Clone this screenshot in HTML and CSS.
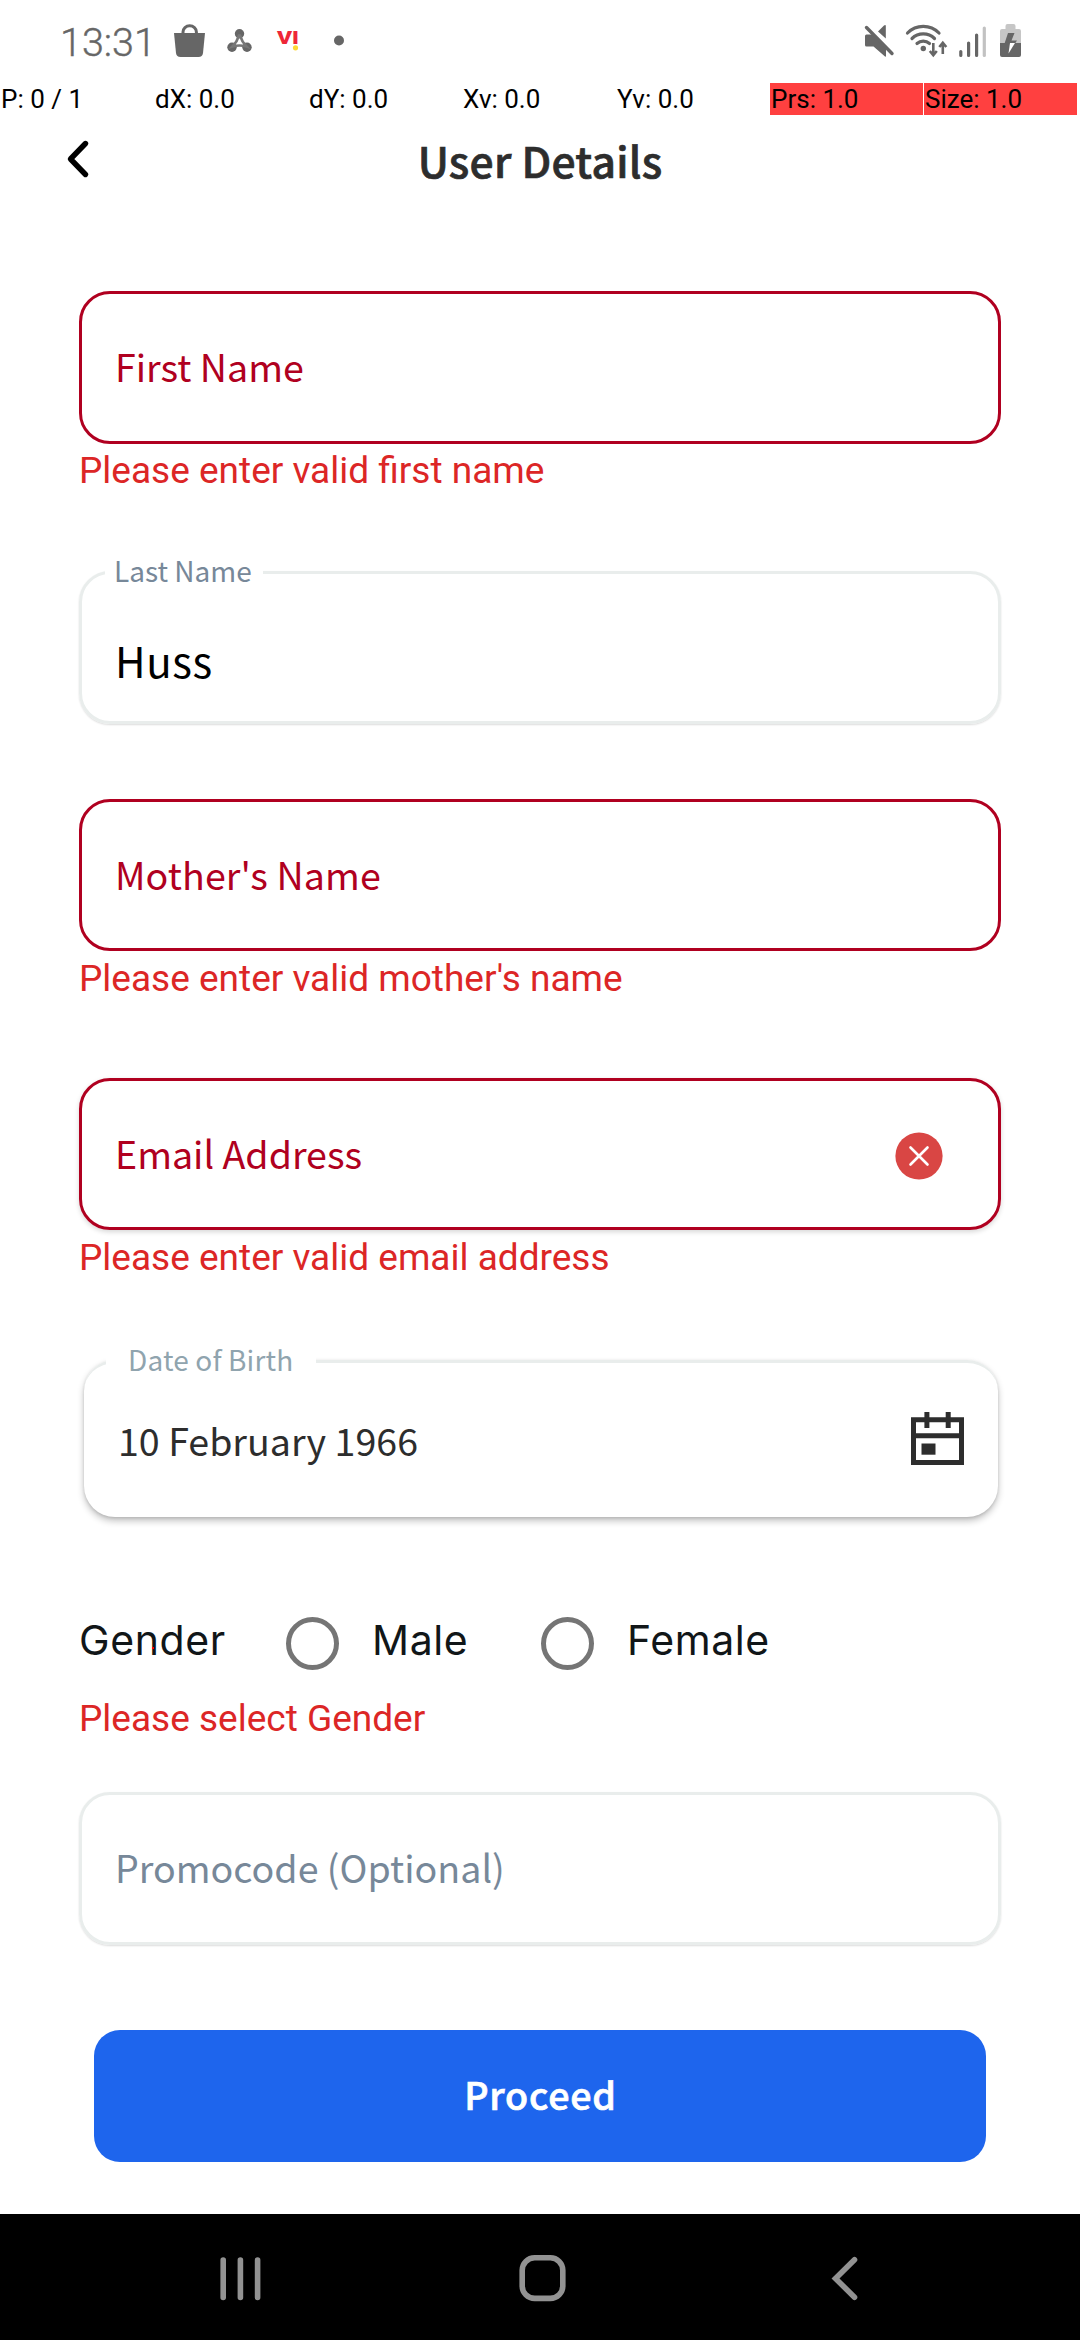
FILE: index.html
```html
<!DOCTYPE html>
<html lang="en">
<head>
<meta charset="utf-8">
<title>User Details</title>
<link rel="stylesheet" href="styles.css">
</head>
<body>
<div class="screen">
  <header class="status">
    <span class="clock">13:31</span>
    <svg class="status-left" width="180" height="40" viewBox="170 20 180 40">
      <g fill="#666">
        <path d="M174 33h31l-2 20q-.5 4-4.500 4h-18q-4 0-4.500-4z"/>
        <path d="M183 34v-2a6.700 6.200 0 0 1 13.400 0v2" fill="none" stroke="#666" stroke-width="3"/>
        <circle cx="239.500" cy="33.800" r="4.700"/><circle cx="232" cy="47.300" r="4.700"/><circle cx="247" cy="47.300" r="4.700"/>
        <path d="M239 35.500Q237 42 232.500 46.500Q239.500 44.500 246.500 46.500Q242 42 240 35.500z" fill="none" stroke="#777" stroke-width="2.600"/>
        <circle cx="339" cy="40.500" r="5"/>
      </g>
      <text class="carrier" x="277" y="44" textLength="22" lengthAdjust="spacingAndGlyphs">VI</text>
      <circle cx="295.500" cy="47.800" r="2.600" fill="#fdd835"/>
    </svg>
    <svg class="status-right" width="170" height="40" viewBox="860 20 170 40">
      <g fill="#666">
        <path d="M865 36q0-1.500 1.500-1.500h6L886 48.500V56q0 1-1 .5L873.500 46.500h-7q-1.500 0-1.500-1.500z"/>
        <path d="M878 31.500l6-6q1.800-1 1.800.5V38.500z"/>
        <path d="M866.500 27.500l25.500 26" stroke="#666" stroke-width="3.400" stroke-linecap="round"/>
      </g>
      <g fill="none" stroke="#666" stroke-width="3.200" stroke-linecap="round">
        <path d="M907.500 33a22 22 0 0 1 31.500 0M912 38.500a16 16 0 0 1 22.500 0M917 43.500a9.500 9.500 0 0 1 12.500 0"/>
      </g>
      <circle cx="923.300" cy="48.500" r="2.700" fill="#666"/>
      <path d="M933.300 43v12M929.800 51l3.500 4.200 3.500-4.200M942.800 54V43M939.300 47l3.500-4.200 3.500 4.200" fill="none" stroke="#666" stroke-width="2.600"/>
      <g stroke="#666" stroke-width="3.200" stroke-linecap="round">
        <path d="M960.800 51.500v4M968.600 43v12.500M976.600 35v20.500"/><path stroke="#c2c2c2" d="M984.300 28v27.500"/>
      </g>
      <path fill="#c6c6c6" d="M1005.500 29v-3q0-2 2-2h6q2 0 2 2v3h3.500q2 0 2 2v12h-21V31q0-2 2-2z"/>
      <path fill="#666" d="M1000 43h21v12q0 2-2 2h-17q-2 0-2-2z"/>
      <path fill="#666" d="M1008 33h6.500l-3 7.500h5.500l-2 3h-10.500z"/>
      <path fill="#fff" d="M1010 43h5l-6.500 10.500z"/>
    </svg>
  </header>

  <div class="pointer-bar">
    <span>P: 0 / 1</span><span>dX: 0.0</span><span>dY: 0.0</span><span>Xv: 0.0</span><span>Yv: 0.0</span><span class="hot">Prs: 1.0</span><span class="hot">Size: 1.0</span>
  </div>

  <nav class="app-bar">
    <svg class="back" width="30" height="44" viewBox="0 0 30 44"><path d="M21.500 6.500L6.500 22l15 15.500" fill="none" stroke="#000" stroke-width="5.400" stroke-linecap="round" stroke-linejoin="round"/></svg>
    <h1>User Details</h1>
  </nav>

  <main class="form">
    <div class="field invalid"><span class="hint">First Name</span></div>
    <p class="error">Please enter valid first name</p>

    <div class="field last"><span class="label">Last Name</span><span class="value">Huss</span></div>

    <div class="field invalid mother"><span class="hint">Mother's Name</span></div>
    <p class="error">Please enter valid mother's name</p>

    <div class="field invalid email">
      <span class="hint">Email Address</span>
      <svg class="clear" width="48" height="48" viewBox="0 0 48 48"><circle cx="24" cy="24" r="23.600" fill="#d94644"/><path d="M15.500 15.500l17 17M32.500 15.500l-17 17" stroke="#fff" stroke-width="2.600" stroke-linecap="round"/></svg>
    </div>
    <p class="error">Please enter valid email address</p>

    <div class="date">
      <span class="label">Date of Birth</span>
      <span class="hint">10 February 1966</span>
      <svg class="calendar" width="53" height="53" viewBox="0 0 53 53"><g fill="none" stroke="#2d2d2d" stroke-width="5"><path d="M2.500 7.700h48v42.800h-48zM2.500 23.700h48M15.900 0v16M37.200 0v16"/></g><path fill="#2d2d2d" d="M10.500 31.500H24.500V42.700H10.500z"/></svg>
    </div>

    <div class="gender">
      <span class="gender-title">Gender</span>
      <i class="radio"></i><span class="male">Male</span>
      <i class="radio"></i><span class="female">Female</span>
      <b class="pointer"></b>
    </div>
    <p class="error gender-error">Please select Gender</p>

    <div class="field promo"><span class="hint">Promocode (Optional)</span></div>
    <button class="proceed" type="button">Proceed</button>
  </main>

  <footer class="system-nav">
    <svg width="1080" height="126" viewBox="0 2214 1080 126" fill="none" stroke="#929292" stroke-width="5.600" stroke-linecap="round" stroke-linejoin="round">
      <path d="M223.200 2260v37.500M240.400 2260v37.500M257.600 2260v37.500"/>
      <rect x="522.200" y="2257.800" width="40.600" height="40.600" rx="12.500"/>
      <path stroke-linejoin="miter" d="M854.500 2259.800L835.500 2278.500l19 18.700"/>
    </svg>
  </footer>
</div>
</body>
</html>
```
FILE: styles.css
```css
* { box-sizing: border-box; }

body {
  margin: 0;
  background: #fff;
  font-family: Roboto, sans-serif;
}

.screen {
  width: 1080px;
  height: 2340px;
  display: flex;
  flex-direction: column;
  overflow: hidden;
}

.status {
  height: 83px;
  padding: 20px 50px 0 60px;
  display: flex;
  align-items: flex-start;
}

.clock {
  width: 110px;
  font-size: 39.5px;
  line-height: 45px;
  font-weight: 300;
  -webkit-text-stroke: 0.4px #666;
  color: #666;
  white-space: nowrap;
}

.status-right { margin-left: auto; }

.carrier {
  font: 900 18px Roboto, sans-serif;
  fill: #ee2737;
}

.pointer-bar {
  height: 32px;
  display: grid;
  grid-template-columns: repeat(7, 153px);
  column-gap: 1px;
  font-size: 26px;
  line-height: 32px;
  color: #000;
}

.pointer-bar span { padding-left: 1px; white-space: nowrap; }
.pointer-bar .hot { background: #ff4040; }

.app-bar {
  height: 176px;
  padding: 22px 64px 0;
  display: grid;
  grid-template-columns: 30px 1fr 30px;
  align-items: start;
}

.app-bar h1 {
  margin: -1px 0 0;
  text-align: center;
  font: 500 42.6px/48px "Noto Sans CJK SC", sans-serif;
  letter-spacing: 0.25px;
  -webkit-text-stroke: 0.7px #2d2d2d;
  color: #2d2d2d;
}

.form {
  height: 1923px;
  padding: 0 79px;
  display: flex;
  flex-direction: column;
}

.field {
  position: relative;
  height: 153px;
  flex: none;
  padding: 0 55px 4px 33px;
  display: flex;
  align-items: center;
  border: 3px solid #e9edec;
  border-radius: 31px;
  box-shadow: 0 1px 2px rgba(0, 0, 0, 0.14);
  font-family: "Noto Sans CJK SC", sans-serif;
  color: #778899;
}

.invalid {
  border-color: #b00020;
  color: #b00020;
  box-shadow: none;
}

.hint {
  font-size: 37.6px;
  line-height: 54px;
  white-space: nowrap;
}

.error {
  flex: none;
  margin: 4px 0 0;
  padding-top: 1px;
  height: 44px;
  font-size: 37px;
  line-height: 44px;
  color: #dc2626;
  white-space: nowrap;
}

.label {
  position: absolute;
  font-size: 28px;
  line-height: 40px;
  background: #fff;
  white-space: nowrap;
}

.last { margin-top: 79px; align-items: flex-start; }
.last .label { left: 23px; top: -24px; width: 158px; padding-left: 9px; }
.value { margin-top: 56px; font-size: 42px; line-height: 60px; letter-spacing: 0.6px; color: #000; }

.mother { margin-top: 75px; height: 152px; }
.mother .hint { letter-spacing: 0.1px; }
.mother .hint, .email .hint { padding-top: 1px; }
.mother + .error, .email + .error { margin-top: 5px; }

.email {
  margin-top: 78px;
  height: 152px;
  justify-content: space-between;
  box-shadow: 0 2px 5px rgba(0, 0, 0, 0.16);
}

.clear { margin-top: 8px; }

.date {
  position: relative;
  flex: none;
  height: 157px;
  margin: 81px 3px 0 5px;
  padding: 0 34px 0 34px;
  display: flex;
  align-items: center;
  justify-content: space-between;
  border-top: 3px solid #e9edec;
  border-radius: 31px;
  box-shadow: 0 4px 7px rgba(0, 0, 0, 0.24), 0 1px 3px rgba(0, 0, 0, 0.12);
  font-family: "Noto Sans CJK SC", sans-serif;
  color: #2d2d2d;
}

.date .label { left: 22px; top: -24px; width: 210px; padding-left: 22px; letter-spacing: 0.15px; color: #90a4ae; }
.calendar { margin-bottom: 3px; }

.gender {
  position: relative;
  flex: none;
  height: 60px;
  margin-top: 96px;
  display: flex;
  align-items: center;
  font-family: Inter, sans-serif;
  font-size: 41px;
  line-height: 54px;
  letter-spacing: 0.6px;
  color: #111618;
}

.gender span { position: relative; top: -3px; white-space: nowrap; }
.gender .gender-title { width: 207px; }

.radio {
  width: 53px;
  height: 53px;
  margin-right: 33px;
  border: 5px solid #757575;
  border-radius: 50%;
}

.gender .male { width: 169px; }

.pointer {
  position: absolute;
  left: 73px;
  top: 34px;
  width: 2px;
  height: 2px;
  background: #f00;
}

.gender-error { margin-top: 24px; padding-top: 0; }

.promo { margin-top: 51px; }

.proceed {
  flex: none;
  height: 132px;
  margin: 85px 15px 0;
  padding: 0 0 4px 1px;
  border: 0;
  border-radius: 26px;
  background: #1e65ed;
  color: #fff;
  font: 500 37.6px/54px "Noto Sans CJK SC", sans-serif;
  letter-spacing: 0.8px;
  -webkit-text-stroke: 0.7px #fff;
}

.system-nav { height: 126px; background: #000; }
.system-nav svg { display: block; }
```
